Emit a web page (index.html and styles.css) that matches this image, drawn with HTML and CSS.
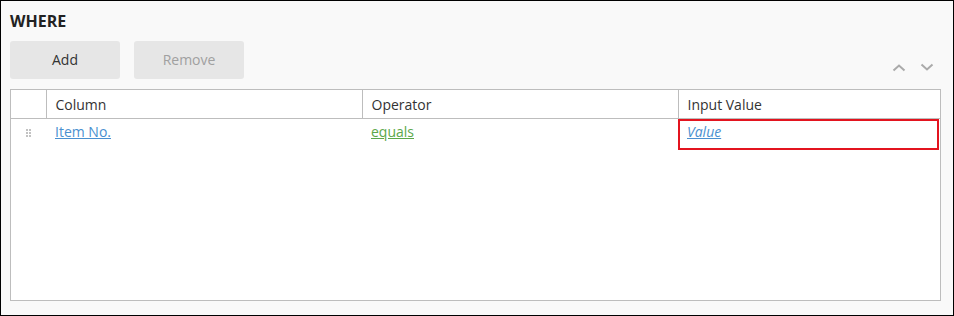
FILE: index.html
```html
<!DOCTYPE html>
<html lang="en">

<head>
  <meta charset="UTF-8">
  <meta name="viewport" content="width=device-width, initial-scale=1.0">
  <title>Where</title>
  <link rel="stylesheet" href="styles.css">
</head>

<body>
  <div class="panel">
    <h2 class="panel-title">WHERE</h2>

    <div class="toolbar">
      <div class="buttons">
        <button class="btn">Add</button>
        <button class="btn disabled">Remove</button>
      </div>
      <div class="arrows">
        <svg width="14" height="9" viewBox="0 0 14 9">
          <path d="M1.5 7.5 L7 2.5 L12.5 7.5" fill="none" stroke="#aaa" stroke-width="2" />
        </svg>
        <svg width="14" height="9" viewBox="0 0 14 9">
          <path d="M1.5 1.5 L7 6.5 L12.5 1.5" fill="none" stroke="#aaa" stroke-width="2" />
        </svg>
      </div>
    </div>

    <div class="grid">
      <table>
        <thead>
          <tr>
            <th class="col-drag"></th>
            <th class="col-column">Column</th>
            <th class="col-operator">Operator</th>
            <th class="col-value">Input Value</th>
          </tr>
        </thead>
        <tbody>
          <tr>
            <td class="drag">
              <span class="handle"></span>
            </td>
            <td><a class="link-blue" href="#">Item No.</a></td>
            <td><a class="link-green" href="#">equals</a></td>
            <td class="value-cell">
              <div class="value-box"><a class="link-value" href="#">Value</a></div>
            </td>
          </tr>
        </tbody>
      </table>
    </div>
  </div>
</body>

</html>
```

FILE: styles.css
```css
* {
  margin: 0;
  padding: 0;
  box-sizing: border-box;
}

body {
  font-family: "Open Sans", sans-serif;
  font-size: 14px;
  color: #333;
  background: #fff;
}

.panel {
  width: 954px;
  height: 316px;
  border: 1px solid #000;
  background: #f9f9f9;
  padding: 9px 12px 14px 9px;
  display: flex;
  flex-direction: column;
}

.panel-title {
  font-size: 16px;
  font-weight: 700;
  color: #222;
  line-height: 22px;
  margin-bottom: 9px;
}

.toolbar {
  display: flex;
  align-items: flex-end;
  justify-content: space-between;
  margin-bottom: 10px;
}

.buttons {
  display: flex;
  gap: 14px;
}

.btn {
  width: 110px;
  height: 38px;
  border: none;
  border-radius: 3px;
  background: #e6e6e6;
  font-family: "Open Sans", sans-serif;
  font-size: 14px;
  line-height: 36px;
  color: #333;
  cursor: pointer;
}

.btn.disabled {
  color: #a0a0a0;
  cursor: default;
}

.arrows {
  display: flex;
  gap: 14px;
  padding-right: 7px;
  padding-bottom: 7px;
}

.arrows svg {
  display: block;
}

.grid {
  flex: 1;
  border: 1px solid #bdbdbd;
  background: #fff;
}

table {
  width: 100%;
  border-collapse: collapse;
  table-layout: fixed;
}

th {
  height: 28px;
  text-align: left;
  font-weight: 400;
  padding: 1px 9px 0;
  border-bottom: 1px solid #bdbdbd;
  border-right: 1px solid #bdbdbd;
  color: #333;
}

th:last-child {
  border-right: none;
}

.col-drag {
  width: 35px;
}

.col-column,
.col-operator {
  width: 316px;
}

td {
  height: 30px;
  padding: 3px 9px 0;
  line-height: 20px;
  vertical-align: top;
}

.drag {
  padding: 10px 0 0 15px;
}

.handle {
  display: block;
  width: 2px;
  height: 2px;
  background: #c2c2c2;
  box-shadow: 3px 0 #c2c2c2, 0 3px #c2c2c2, 3px 3px #c2c2c2, 0 6px #c2c2c2, 3px 6px #c2c2c2;
}

a {
  text-decoration: underline;
}

.link-blue {
  color: #4a90d0;
}

.link-green {
  color: #5ba84a;
}

.value-cell {
  padding: 0 1px 0 0;
}

.value-box {
  height: 31px;
  border: 2px solid #e3141f;
  padding: 1px 7px 0;
  line-height: 20px;
}

.link-value {
  color: #4a90d0;
  font-style: italic;
}
```
